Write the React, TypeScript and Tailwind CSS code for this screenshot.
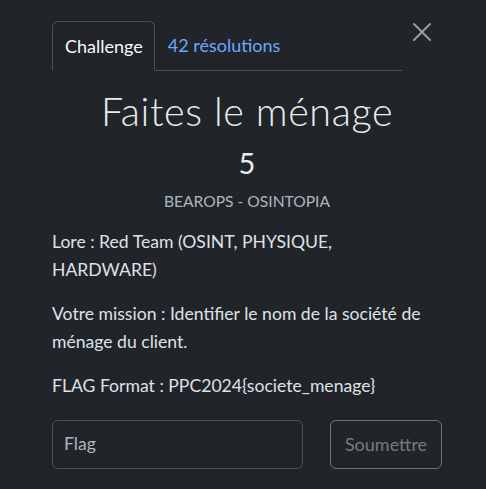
import React from "react";

export default function App() {
  return (
    <div
      className="w-[486px] h-[489px] bg-[#212529] text-[#dee2e6] overflow-hidden"
      style={{ fontFamily: "Lato, 'Noto Sans', sans-serif" }}
    >
      <div className="flex pt-[21px] pl-[52px] pr-[44px]">
        <div className="flex w-[350px] border-b border-[#495057]">
          <div className="h-[50px] -mb-px pl-[12px] pr-[11px] flex items-center border border-[#495057] border-b-[#212529] rounded-t-[6px] bg-[#212529] text-[18px] text-[#f8f9fa]">
            Challenge
          </div>
          <div className="h-[49px] px-[13px] flex items-center text-[18px] text-[#6ea8fe]">
            42 résolutions
          </div>
        </div>
        <div className="flex-1 flex justify-end pr-[10px]">
          <svg width="20" height="20" viewBox="0 0 20 20" className="mt-[1px]">
            <path d="M2 2 L18 18 M18 2 L2 18" stroke="#9a9ea3" strokeWidth="2" strokeLinecap="round" />
          </svg>
        </div>
      </div>

      <div className="w-[390px] ml-[52px] flex flex-col">
        <div className="mt-[16px] text-center text-[39.5px] font-light leading-[48px] tracking-[0.6px] text-[#e9ecef]">
          Faites le ménage
        </div>
        <div className="mt-[10px] text-center text-[29px] leading-[36px] text-[#e9ecef]">5</div>
        <div className="mt-[9px] text-center text-[15.6px] leading-[22px] text-[#adb5bd]">
          BEAROPS - OSINTOPIA
        </div>

        <div className="mt-[16px] w-[380px] text-[17.6px] leading-[28px] text-[#dee2e6]">
          <p>Lore : Red Team (OSINT, PHYSIQUE, HARDWARE)</p>
          <p className="mt-[16px]">
            Votre mission : Identifier le nom de la société de ménage du client.
          </p>
          <p className="mt-[16px]">FLAG Format : PPC2024{"{"}societe_menage{"}"}</p>
        </div>

        <div className="mt-[20px] flex gap-[27px]">
          <div className="w-[251px] h-[49px] rounded-[6px] border border-[#495057] flex items-center px-[11px] text-[17.6px] text-[#adb5bd]">
            Flag
          </div>
          <div className="w-[112px] h-[49px] rounded-[6px] border border-[#6c757d] flex items-center justify-center text-[18px] text-[#737b82]">
            Soumettre
          </div>
        </div>
      </div>
    </div>
  );
}
